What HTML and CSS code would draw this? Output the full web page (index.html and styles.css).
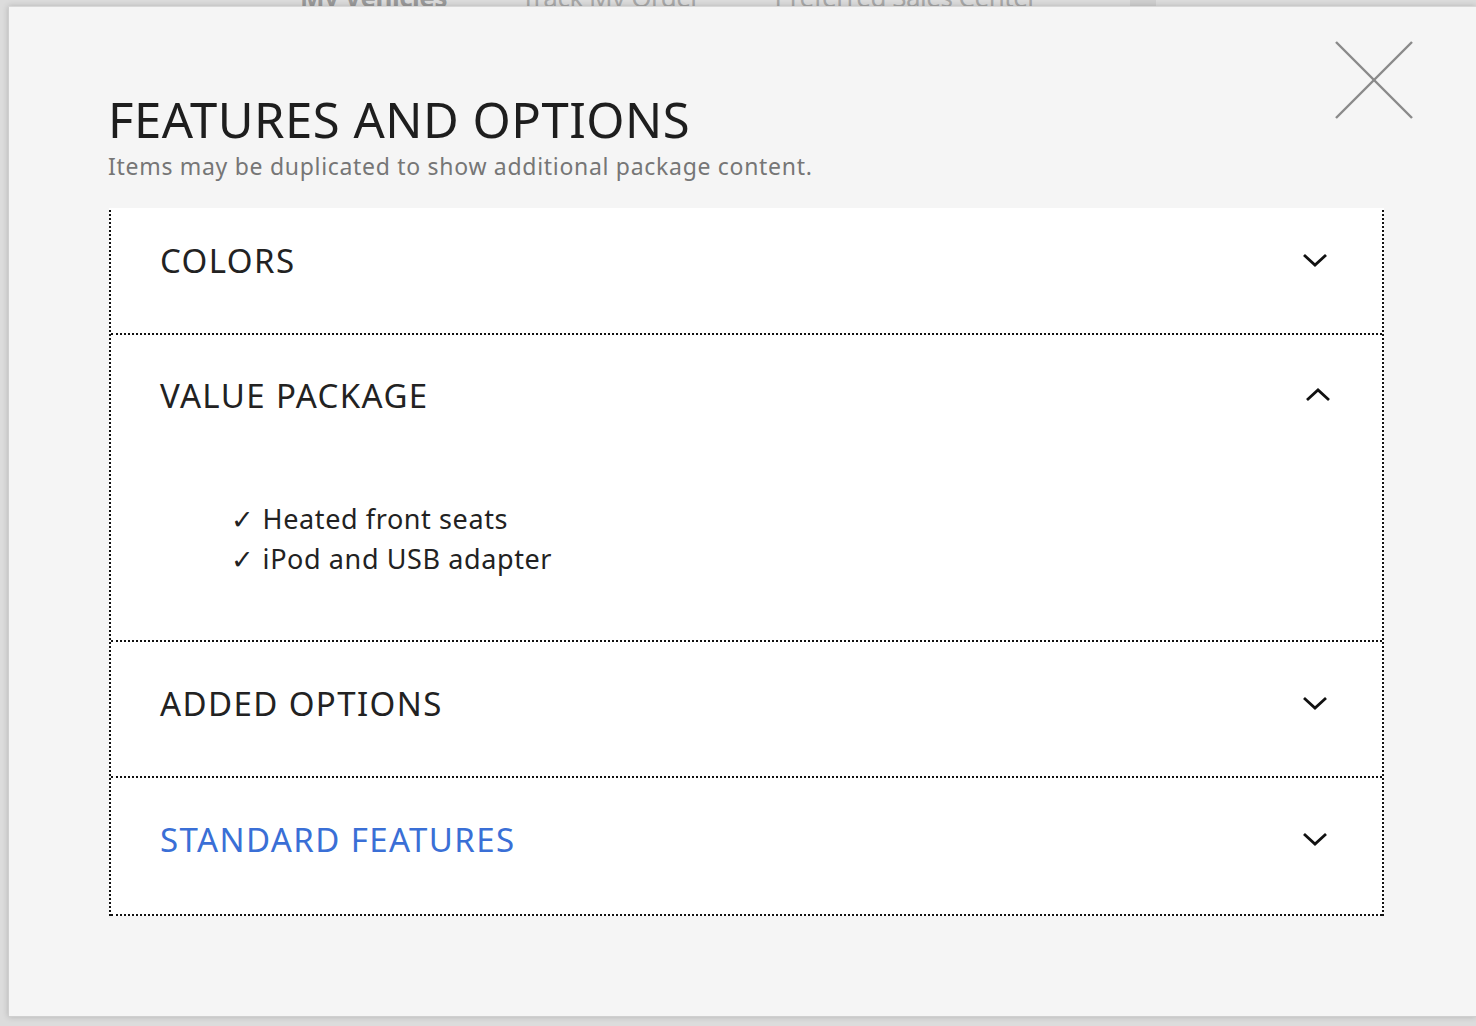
FILE: index.html
```html
<!DOCTYPE html>
<html lang="en">
<head>
  <meta charset="UTF-8">
  <title>Features and Options</title>
  <link rel="stylesheet" href="styles.css">
</head>
<body>

  <!-- page behind the overlay -->
  <div class="topnav">
    <span class="nav-link active">My Vehicles</span>
    <span class="nav-link">Track My Order</span>
    <span class="nav-link">Preferred Sales Center</span>
    <span class="nav-box"></span>
  </div>

  <!-- modal -->
  <div class="modal">
    <button class="close" aria-label="Close">
      <svg width="80" height="80" viewBox="0 0 80 80">
        <line x1="2" y1="2" x2="78" y2="78" />
        <line x1="78" y1="2" x2="2" y2="78" />
      </svg>
    </button>

    <h1>FEATURES AND OPTIONS</h1>
    <p class="sub">Items may be duplicated to show additional package content.</p>

    <div class="acc-scroll">
      <div class="acc-list">

        <div class="acc-item">
          <div class="acc-head">
            <span>COLORS</span>
            <svg class="chev" width="26" height="16" viewBox="0 0 26 16"><polyline points="2,3 13,13 24,3" /></svg>
          </div>
        </div>

        <div class="acc-item open">
          <div class="acc-head">
            <span>VALUE PACKAGE</span>
            <svg class="chev up" width="26" height="16" viewBox="0 0 26 16"><polyline points="2,13 13,3 24,13" /></svg>
          </div>
          <ul class="acc-body">
            <li>Heated front seats</li>
            <li>iPod and USB adapter</li>
          </ul>
        </div>

        <div class="acc-item">
          <div class="acc-head">
            <span>ADDED OPTIONS</span>
            <svg class="chev" width="26" height="16" viewBox="0 0 26 16"><polyline points="2,3 13,13 24,3" /></svg>
          </div>
        </div>

        <div class="acc-item">
          <div class="acc-head link">
            <span>STANDARD FEATURES</span>
            <svg class="chev" width="26" height="16" viewBox="0 0 26 16"><polyline points="2,3 13,13 24,3" /></svg>
          </div>
        </div>

      </div>
    </div>
  </div>

</body>
</html>
```

FILE: styles.css
```css
html, body {
  margin: 0;
  height: 100%;
}

body {
  font-family: 'Noto Sans', sans-serif;
  background-color: #dcdcdc;
  color: #222;
  overflow: hidden;
  position: relative;
}

.topnav {
  display: flex;
  align-items: center;
  height: 30px;
  margin-top: -18px;
  padding-left: 300px;
  gap: 74px;
}

.nav-link {
  font-size: 26px;
  color: #a8a8a8;
  letter-spacing: -0.5px;
}

.nav-link.active {
  font-weight: 700;
  color: #9a9a9a;
}

.nav-box {
  width: 26px;
  height: 30px;
  background: #cfcfcf;
  margin-left: 18px;
}

.modal {
  position: absolute;
  left: 8px;
  top: 6px;
  right: 0;
  bottom: 9px;
  background: #f5f5f5;
  box-shadow: 0 0 6px rgba(0, 0, 0, 0.18);
  border-left: 1px solid #cfcfcf;
  border-bottom: 1px solid #cfcfcf;
  border-top: 1px solid #d8d8d8;
  padding-left: 100px;
  padding-right: 92px;
}

.close {
  position: absolute;
  top: 33px;
  right: 62px;
  background: none;
  border: none;
  padding: 0;
  cursor: pointer;
}

.close svg line {
  stroke: #8a8a8a;
  stroke-width: 2.4;
}

h1 {
  margin: 81px 0 0 -1px;
  font-size: 49px;
  font-weight: 400;
  line-height: 62px;
  letter-spacing: 0.5px;
  color: #1e1e1e;
}

.sub {
  margin: 0 0 0 -1px;
  font-size: 23px;
  line-height: 32px;
  letter-spacing: 0.7px;
  color: #767676;
}

.acc-scroll {
  margin-top: 26px;
  overflow: hidden;
  background: #fff;
}

.acc-list {
  margin-top: -9px;
  border-left: 2px dotted #111;
  border-right: 2px dotted #111;
}

.acc-item {
  border-bottom: 2px dotted #111;
}

.acc-head {
  box-sizing: border-box;
  height: 134px;
  display: flex;
  align-items: center;
  justify-content: space-between;
  padding: 0 54px 12px 49px;
  font-size: 33px;
  color: #222;
  letter-spacing: 1.4px;
}

.acc-item:last-child .acc-head {
  height: 136px;
  padding-bottom: 14px;
}

.acc-head.link {
  color: #3a6fd6;
}

.open .acc-head {
  height: 124px;
  padding-bottom: 4px;
}

.chev polyline {
  fill: none;
  stroke: #111;
  stroke-width: 2.8;
}

.chev.up {
  margin-right: -3px;
}

.acc-body {
  list-style: none;
  margin: 0;
  padding: 40px 0 61px 120px;
  font-size: 27px;
  line-height: 40px;
  letter-spacing: 0.6px;
  color: #222;
}

.acc-body li::before {
  content: "\2713";
  margin-right: 8px;
}
```
